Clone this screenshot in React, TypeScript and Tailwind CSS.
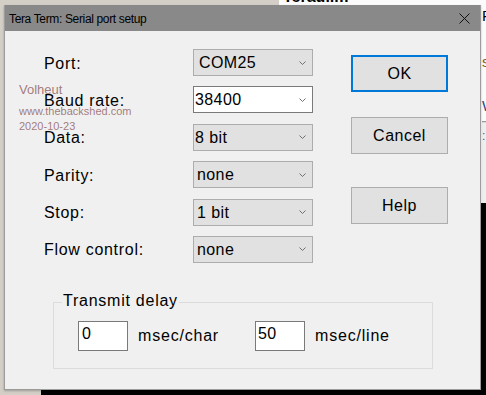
import React from "react";

const rows = [
  { label: "Port:", value: "COM25", pad: "pl-[5px]", white: false },
  { label: "Baud rate:", value: "38400", pad: "pl-[1px]", white: true },
  { label: "Data:", value: "8 bit", pad: "pl-[1px]", white: false },
  { label: "Parity:", value: "none", pad: "pl-[3px]", white: false },
  { label: "Stop:", value: "1 bit", pad: "pl-[3px]", white: false },
  { label: "Flow control:", value: "none", pad: "pl-[3px]", white: false },
];

const Chevron = () => (
  <svg width="7" height="4" viewBox="0 0 7 4" className="shrink-0">
    <path d="M0.5 0.5 L3.5 3.5 L6.5 0.5" fill="none" stroke="#707070" strokeWidth="1" />
  </svg>
);

const Select = ({ value, pad, white }: { value: string; pad: string; white: boolean }) => (
  <div
    className={
      white
        ? `flex items-center justify-between h-[27px] w-[120px] border border-[#7a7a7a] bg-white pr-[6px] ${pad}`
        : `flex items-center justify-between h-[27px] w-[120px] border border-[#adadad] bg-[#e1e1e1] pr-[6px] ${pad}`
    }
  >
    <span className="tracking-[0.4px] pt-[1px]">{value}</span>
    <Chevron />
  </div>
);

export default function App() {
  return (
    <div className="relative w-[486px] h-[395px] overflow-hidden bg-[#d3cfc7] font-['Liberation_Sans',Arial,sans-serif] text-black">
      {/* window behind, top right */}
      <div className="absolute left-[279px] top-0 w-[207px] h-[203px] bg-[#fbfbfb] flex flex-col pl-[203px]">
        <span className="absolute left-[4px] -top-[12px] text-[16px] font-bold leading-[18px] whitespace-nowrap">Teraulim</span>
        <span className="mt-[8px] text-[15px] leading-[16px]">P</span>
        <span className="mt-[30px] text-[15px] leading-[16px] text-[#8a5a20]">st</span>
        <span className="mt-[28px] text-[15px] leading-[16px] text-[#2a4a8a]">W</span>
        <div className="mt-[7px] h-[1px] bg-[#9a9a9a]" />
        <div className="flex-1 bg-[#eeeeee] border-t border-[#d8d8d8] text-[12px] text-[#3a5a9a] pt-[4px]">:</div>
      </div>
      {/* black window behind */}
      <div className="absolute left-[41px] top-[203px] w-[445px] h-[192px] bg-black" />

      {/* dialog */}
      <div className="absolute left-[4px] top-[5px] w-[477px] h-[385px] flex flex-col bg-[#f0f0f0] border border-t-0 border-[#9c9c9c] shadow-[0_1px_2px_rgba(0,0,0,0.25)]">
        <div className="h-[26px] bg-[#898989] flex items-center justify-between pl-[4px] pr-[10px] shrink-0">
          <span className="text-[12px] tracking-[-0.35px] leading-[14px] pt-[1px]">Tera Term: Serial port setup</span>
          <svg width="11" height="11" viewBox="0 0 11 11">
            <path d="M0.5 0.5 L10.5 10.5 M10.5 0.5 L0.5 10.5" stroke="#111" strokeWidth="1" />
          </svg>
        </div>

        <div className="relative flex-1 flex flex-col">
          <div className="flex pt-[18px]">
            <div className="grid grid-cols-[149px_120px] gap-y-[10.4px] pl-[39px] text-[16px]">
              {rows.map((r) => (
                <React.Fragment key={r.label}>
                  <span className="flex items-center tracking-[0.7px] pt-[2px]">{r.label}</span>
                  <Select value={r.value} pad={r.pad} white={r.white} />
                </React.Fragment>
              ))}
            </div>
            <div className="ml-[38px] mt-[6px] flex flex-col text-[16px] tracking-[0.5px]">
              <button className="w-[97px] h-[37px] border-2 border-[#0078d7] bg-[#e1e1e1]">OK</button>
              <button className="mt-[25px] w-[97px] h-[37px] border border-[#adadad] bg-[#e1e1e1]">Cancel</button>
              <button className="mt-[33px] w-[97px] h-[37px] border border-[#adadad] bg-[#e1e1e1]">Help</button>
            </div>
          </div>

          <div className="relative ml-[48px] mt-[39px] w-[380px] h-[67px] border border-[#dcdcdc] pl-[24px] pt-[18px] text-[16px]">
            <span className="absolute left-[8px] -top-[11px] px-[1px] bg-[#f0f0f0] leading-[18px] tracking-[0.75px]">Transmit delay</span>
            <div className="flex items-center">
              <div className="w-[50px] h-[30px] border border-[#7a7a7a] bg-white pl-[3px] pt-[3px] leading-[18px] tracking-[0.4px]">0</div>
              <span className="ml-[10px] w-[117px] tracking-[0.8px]">msec/char</span>
              <div className="w-[50px] h-[30px] border border-[#7a7a7a] bg-white pl-[2px] pt-[3px] leading-[18px] tracking-[0.4px]">50</div>
              <span className="ml-[10px] tracking-[0.8px]">msec/line</span>
            </div>
          </div>

          {/* watermark */}
          <div className="absolute left-[14px] top-[52px] flex flex-col text-[#8e5c5c]/80 pointer-events-none">
            <span className="text-[13px] leading-[14px]">Volheut</span>
            <span className="mt-[8px] text-[11px] leading-[12px]">www.thebackshed.com</span>
            <span className="mt-[3px] text-[11px] leading-[12px]">2020-10-23</span>
          </div>
        </div>
      </div>
    </div>
  );
}
